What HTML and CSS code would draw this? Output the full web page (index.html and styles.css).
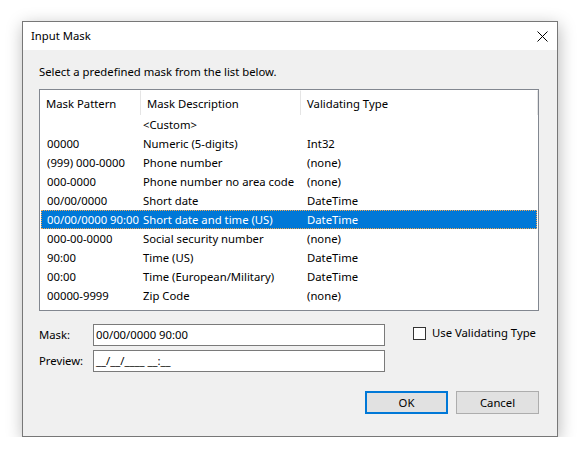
FILE: index.html
```html
<!DOCTYPE html>
<html>
<head>
<meta charset="utf-8">
<link rel="stylesheet" href="styles.css">
</head>
<body>
<div class="window">
  <div class="titlebar">
    <span class="title">Input Mask</span>
    <svg class="close" width="11" height="11" viewBox="0 0 11 11"><path d="M0.5 0.5L10.5 10.5M10.5 0.5L0.5 10.5" stroke="#000" stroke-width="1"/></svg>
  </div>
  <div class="content">
    <div class="prompt">Select a predefined mask from the list below.</div>
    <div class="list">
      <div class="header">
        <div class="hcell c1">Mask Pattern</div>
        <div class="hcell c2">Mask Description</div>
        <div class="hcell c3">Validating Type</div>
      </div>
      <div class="row"><div class="cell c1"></div><div class="cell c2">&lt;Custom&gt;</div><div class="cell c3"></div></div>
      <div class="row"><div class="cell c1">00000</div><div class="cell c2">Numeric (5-digits)</div><div class="cell c3">Int32</div></div>
      <div class="row"><div class="cell c1">(999) 000-0000</div><div class="cell c2">Phone number</div><div class="cell c3">(none)</div></div>
      <div class="row"><div class="cell c1">000-0000</div><div class="cell c2">Phone number no area code</div><div class="cell c3">(none)</div></div>
      <div class="row"><div class="cell c1">00/00/0000</div><div class="cell c2">Short date</div><div class="cell c3">DateTime</div></div>
      <div class="row selected"><div class="cell c1">00/00/0000 90:00</div><div class="cell c2">Short date and time (US)</div><div class="cell c3">DateTime</div></div>
      <div class="row"><div class="cell c1">000-00-0000</div><div class="cell c2">Social security number</div><div class="cell c3">(none)</div></div>
      <div class="row"><div class="cell c1">90:00</div><div class="cell c2">Time (US)</div><div class="cell c3">DateTime</div></div>
      <div class="row"><div class="cell c1">00:00</div><div class="cell c2">Time (European/Military)</div><div class="cell c3">DateTime</div></div>
      <div class="row"><div class="cell c1">00000-9999</div><div class="cell c2">Zip Code</div><div class="cell c3">(none)</div></div>
    </div>
    <div class="form">
      <div class="fields">
        <div class="field">
          <span class="label">Mask:</span>
          <div class="textbox">00/00/0000 90:00</div>
        </div>
        <div class="field">
          <span class="label">Preview:</span>
          <div class="textbox">__/__/____ __:__</div>
        </div>
      </div>
      <div class="check">
        <span class="box"></span>
        <span class="checklabel">Use Validating Type</span>
      </div>
    </div>
    <div class="buttons">
      <div class="btn default">OK</div>
      <div class="btn">Cancel</div>
    </div>
  </div>
</div>
</body>
</html>
```
FILE: styles.css
```css
html, body {
  margin: 0;
  padding: 0;
  background: #ffffff;
}
body {
  padding: 21px 0 0 22px;
  font-family: "Noto Sans", "DejaVu Sans", sans-serif;
  font-size: 11.3px;
  color: #000;
}
.window {
  box-sizing: border-box;
  width: 536px;
  height: 416px;
  border: 1px solid #777777;
  background: #f0f0f0;
  box-shadow: 1px 4px 16px rgba(0, 0, 0, 0.28);
  display: flex;
  flex-direction: column;
}
.titlebar {
  height: 28px;
  background: #ffffff;
  display: flex;
  align-items: center;
  justify-content: space-between;
  padding: 0 9px 0 8px;
}
.title {
  line-height: 16px;
}
.close {
  display: block;
  margin-top: 1px;
}
.content {
  padding: 0 18px 0 16px;
  display: flex;
  flex-direction: column;
}
.prompt {
  margin-top: 14px;
  line-height: 16px;
  height: 16px;
}
.list {
  margin-top: 9px;
  box-sizing: border-box;
  height: 222px;
  border: 1px solid #828790;
  background: #ffffff;
}
.header {
  display: flex;
  height: 25px;
}
.hcell {
  box-sizing: border-box;
  padding-left: 6px;
  line-height: 25px;
  border-right: 1px solid #e5e5e5;
  border-top: 1px solid #ffffff;
  white-space: nowrap;
}
.hcell.c1 { width: 101px; }
.hcell.c2 { width: 160px; }
.hcell.c3 { width: 237px; }
.row {
  display: flex;
  height: 19px;
  margin-left: 1px;
  width: 496px;
  box-sizing: border-box;
}
.cell {
  line-height: 19px;
  white-space: nowrap;
  box-sizing: border-box;
}
.cell.c1 { width: 100px; padding-left: 6px; }
.cell.c2 { width: 160px; padding-left: 2px; }
.cell.c3 { flex: 1; padding-left: 6px; }
.row.selected {
  background: #0078d7;
  color: #ffffff;
  outline: 1px dotted #f2a550;
  outline-offset: -1px;
}
.form {
  margin-top: 13px;
  display: flex;
  align-items: flex-start;
}
.fields {
  display: flex;
  flex-direction: column;
  gap: 4px;
}
.field {
  display: flex;
  align-items: center;
}
.label {
  width: 54px;
  line-height: 16px;
}
.textbox {
  box-sizing: border-box;
  width: 292px;
  height: 22px;
  border: 1px solid #7a7a7a;
  background: #ffffff;
  padding-left: 2px;
  line-height: 20px;
  white-space: nowrap;
}
.check {
  margin-left: 28px;
  margin-top: 1px;
  display: flex;
  align-items: center;
  white-space: nowrap;
}
.box {
  box-sizing: border-box;
  width: 13px;
  height: 13px;
  border: 1px solid #333333;
  background: #ffffff;
}
.checklabel {
  margin-left: 6px;
  line-height: 16px;
}
.buttons {
  margin-top: 19px;
  display: flex;
  justify-content: flex-end;
  gap: 8px;
}
.btn {
  box-sizing: border-box;
  width: 83px;
  height: 23px;
  border: 1px solid #adadad;
  background: #e1e1e1;
  display: flex;
  align-items: center;
  justify-content: center;
}
.btn.default {
  border: 2px solid #0078d7;
}
```
